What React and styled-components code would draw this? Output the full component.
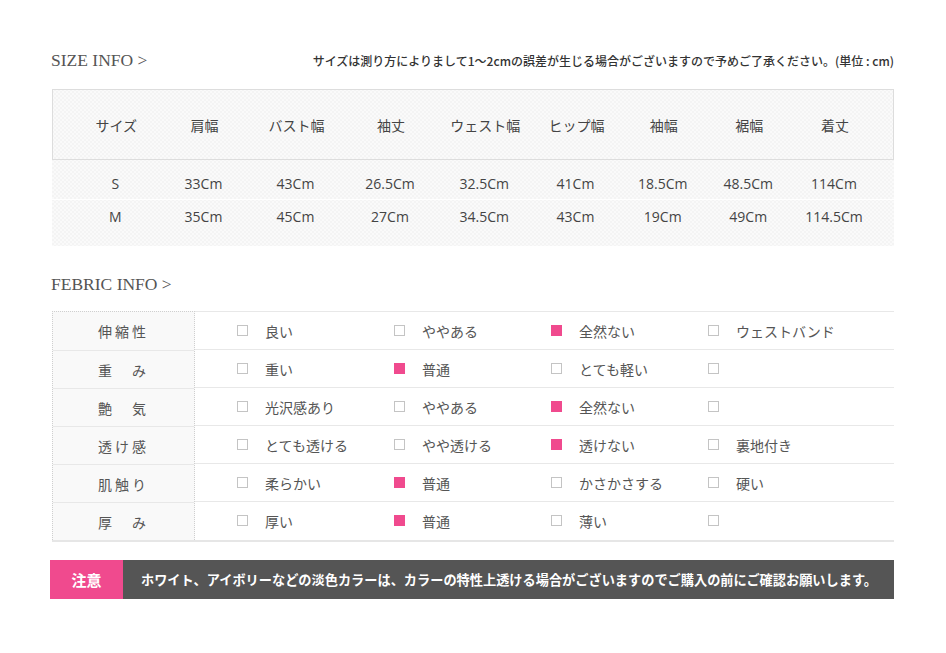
import React from "react";
import styled, { createGlobalStyle } from "styled-components";

const GlobalStyle = createGlobalStyle`
  body {
    margin: 0;
    background: #ffffff;
    font-family: "Open Sans", "Noto Sans CJK JP", sans-serif;
    color: #444444;
  }
`;

const PINK = "#f04a8e";

const sizeHeads = ["サイズ", "肩幅", "バスト幅", "袖丈", "ウェスト幅", "ヒップ幅", "袖幅", "裾幅", "着丈"];
const sizeRows = [
  ["S", "33Cm", "43Cm", "26.5Cm", "32.5Cm", "41Cm", "18.5Cm", "48.5Cm", "114Cm"],
  ["M", "35Cm", "45Cm", "27Cm", "34.5Cm", "43Cm", "19Cm", "49Cm", "114.5Cm"],
];

const fabricRows = [
  { label: "伸縮性", options: ["良い", "ややある", "全然ない", "ウェストバンド"], on: 2 },
  { label: "重　み", options: ["重い", "普通", "とても軽い", ""], on: 1 },
  { label: "艶　気", options: ["光沢感あり", "ややある", "全然ない", ""], on: 2 },
  { label: "透け感", options: ["とても透ける", "やや透ける", "透けない", "裏地付き"], on: 2 },
  { label: "肌触り", options: ["柔らかい", "普通", "かさかさする", "硬い"], on: 1 },
  { label: "厚　み", options: ["厚い", "普通", "薄い", ""], on: 1 },
];

const Page = styled.div`
  width: 844px;
  padding: 50px 0 40px 50px;
`;

const TitleRow = styled.div`
  display: flex;
  align-items: center;
  justify-content: space-between;
  height: 20px;
  padding-left: 1px;
`;

const Title = styled.div`
  font-family: "Liberation Serif", "Noto Sans CJK JP", serif;
  font-size: 17.5px;
  color: #555555;
`;

const Note = styled.div`
  font-family: "Noto Sans CJK JP", sans-serif;
  font-size: 12px;
  font-weight: 500;
  color: #333333;
`;

const SizeTable = styled.div`
  margin: 19px 0 0 2px;
  background-color: #f8f8f8;
  background-image: repeating-conic-gradient(#f4f4f4 0 25%, #fafafa 0 50%);
  background-size: 4px 4px;
`;

const SizeGrid = styled.div`
  display: grid;
  grid-template-columns: 86.5px 90px 94px 95px 93.5px 89px 85.5px 85.5px 86px;
  padding: 0 17px 0 20px;
  align-items: center;
  height: ${(p) => p.$height}px;
  border: ${(p) => (p.$head ? "1px solid #dddddd" : "none")};
  border-bottom: ${(p) => (p.$head ? "1px solid #dddddd" : p.$split ? "1px solid #ffffff" : "none")};
  box-sizing: border-box;
`;

const SizeCell = styled.div`
  text-align: center;
  font-size: 14px;
  font-weight: ${(p) => (p.$head ? 400 : 500)};
  color: #444444;
`;

const SizeBody = styled.div`
  padding: 7px 0 13px;
`;

const FabricTitleRow = styled(TitleRow)`
  margin-top: 28px;
`;

const FabricTable = styled.div`
  margin: 17px 0 0 2px;
  display: grid;
  grid-template-columns: 143px 1fr;
  border-bottom: 2px solid #e6e6e6;
`;

const LabelCol = styled.div`
  background: #f9f9f9;
  border: 1px dotted #cfcfcf;
  border-bottom: none;
`;

const Label = styled.div`
  height: 38px;
  display: flex;
  align-items: center;
  justify-content: center;
  font-family: "Noto Sans CJK JP", sans-serif;
  font-size: 14px;
  letter-spacing: 3px;
  color: #555555;
  border-top: ${(p) => (p.$first ? "none" : "1px solid #e8e8e8")};
  box-sizing: border-box;
`;

const OptionRow = styled.div`
  height: 38px;
  display: grid;
  grid-template-columns: repeat(4, 157px);
  align-items: center;
  padding-left: 42px;
  border-top: 1px solid #e8e8e8;
  box-sizing: border-box;
`;

const Option = styled.div`
  display: flex;
  align-items: center;
  gap: 17px;
  font-family: "Noto Sans CJK JP", sans-serif;
  font-size: 14px;
  color: #555555;
`;

const Box = styled.span`
  width: 11px;
  height: 11px;
  box-sizing: border-box;
  border: 1px solid ${(p) => (p.$on ? PINK : "#c4c4c4")};
  background: ${(p) => (p.$on ? PINK : "#ffffff")};
  flex: none;
`;

const Notice = styled.div`
  margin-top: 18px;
  display: flex;
  height: 39px;
  background: #555555;
  color: #ffffff;
  font-family: "Noto Sans CJK JP", sans-serif;
  font-weight: bold;
`;

const NoticeTag = styled.div`
  width: 73px;
  background: ${PINK};
  display: flex;
  align-items: center;
  justify-content: center;
  font-size: 15px;
`;

const NoticeText = styled.div`
  display: flex;
  align-items: center;
  padding-left: 18px;
  font-size: 13.2px;
`;

export default function App() {
  return (
    <Page>
      <GlobalStyle />
      <TitleRow>
        <Title>SIZE INFO &gt;</Title>
        <Note>サイズは測り方によりまして1〜2cmの誤差が生じる場合がございますので予めご了承ください。(単位 : cm)</Note>
      </TitleRow>
      <SizeTable>
        <SizeGrid $head $height={71}>
          {sizeHeads.map((h) => (
            <SizeCell $head key={h}>{h}</SizeCell>
          ))}
        </SizeGrid>
        <SizeBody>
          {sizeRows.map((row, i) => (
            <SizeGrid key={row[0]} $height={33} $split={i === 0}>
              {row.map((v, j) => (
                <SizeCell key={j}>{v}</SizeCell>
              ))}
            </SizeGrid>
          ))}
        </SizeBody>
      </SizeTable>

      <FabricTitleRow>
        <Title>FEBRIC INFO &gt;</Title>
      </FabricTitleRow>
      <FabricTable>
        <LabelCol>
          {fabricRows.map((r, i) => (
            <Label key={r.label} $first={i === 0}>{r.label}</Label>
          ))}
        </LabelCol>
        <div>
          {fabricRows.map((r) => (
            <OptionRow key={r.label}>
              {r.options.map((o, j) => (
                <Option key={j}>
                  <Box $on={j === r.on} />
                  {o}
                </Option>
              ))}
            </OptionRow>
          ))}
        </div>
      </FabricTable>

      <Notice>
        <NoticeTag>注意</NoticeTag>
        <NoticeText>ホワイト、アイボリーなどの淡色カラーは、カラーの特性上透ける場合がございますのでご購入の前にご確認お願いします。</NoticeText>
      </Notice>
    </Page>
  );
}
